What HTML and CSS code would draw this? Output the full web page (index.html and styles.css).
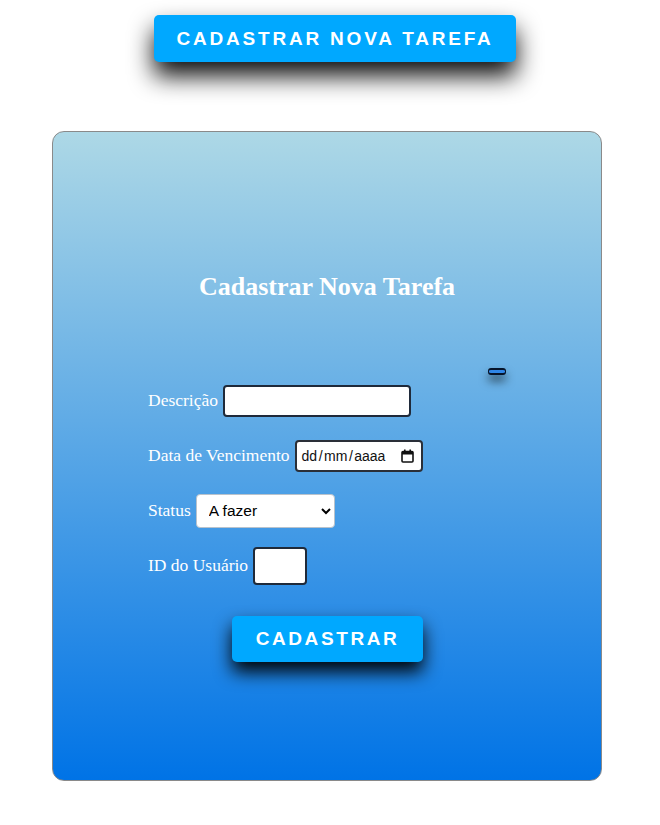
FILE: index.html
```html
<!DOCTYPE html>
<html lang="pt-BR">
<head>
<meta charset="utf-8">
<title>Cadastrar Nova Tarefa</title>
<link rel="stylesheet" href="styles.css">
</head>
<body>
  <div class="top">
    <button class="btn btn-top" type="button">CADASTRAR NOVA TAREFA</button>
  </div>
  <section class="card">
    <span class="dash"></span>
    <h2 class="title">Cadastrar Nova Tarefa</h2>
    <form class="form">
      <div class="row">
        <label for="desc">Descrição</label>
        <input id="desc" class="field field-desc" type="text">
      </div>
      <div class="row">
        <label for="data">Data de Vencimento</label>
        <div id="data" class="field field-date" role="textbox">
          <span class="date-text">dd<span class="sl">/</span>mm<span class="sl">/</span>aaaa</span>
          <svg class="cal" width="13" height="14" viewBox="0 0 13 14" aria-hidden="true">
            <rect x="1" y="2.5" width="11" height="10.5" rx="1" fill="none" stroke="#111" stroke-width="1.6"/>
            <rect x="1" y="2.5" width="11" height="3" fill="#111"/>
            <rect x="3" y="0.5" width="1.6" height="3" fill="#111"/>
            <rect x="8.4" y="0.5" width="1.6" height="3" fill="#111"/>
          </svg>
        </div>
      </div>
      <div class="row">
        <label for="status">Status</label>
        <select id="status" class="field field-select">
          <option>A fazer</option>
          <option>Fazendo</option>
          <option>Pronto</option>
        </select>
      </div>
      <div class="row">
        <label for="uid">ID do Usuário</label>
        <input id="uid" class="field field-id" type="text">
      </div>
      <div class="actions">
        <button class="btn btn-submit" type="button">CADASTRAR</button>
      </div>
    </form>
  </section>
</body>
</html>
```
FILE: styles.css
```css
* { box-sizing: border-box; }
html, body { margin: 0; padding: 0; background: #fff; }
body { font-family: "Liberation Serif", "Times New Roman", serif; }

.top {
  display: flex;
  padding-top: 15px;
  padding-left: 154px;
}

.btn {
  font-family: "Liberation Sans", Arial, sans-serif;
  font-weight: bold;
  color: #fff;
  background: #00a8ff;
  border: none;
  border-radius: 5px;
  letter-spacing: 2.8px;
  cursor: pointer;
}

.btn-top {
  width: 362px;
  height: 47px;
  font-size: 19px;
  box-shadow: 0 14px 24px rgba(0, 0, 0, 0.95);
}

.card {
  position: relative;
  width: 550px;
  height: 650px;
  margin: 69px 0 0 52px;
  border: 1px solid #8a8a8a;
  border-radius: 12px;
  background: linear-gradient(to bottom, #add8e6 0%, #0073e6 100%);
  padding-top: 137px;
}

.dash {
  position: absolute;
  left: 435px;
  top: 236px;
  width: 18px;
  height: 7px;
  border-top: 2px solid #06142a;
  border-bottom: 2px solid #06142a;
  border-left: 1px solid #06142a;
  border-right: 1px solid #06142a;
  border-radius: 3px;
  background: #2f86e8;
  box-shadow: 0 6px 10px rgba(0, 0, 0, 0.6);
}

.title {
  margin: 0;
  text-align: center;
  color: #fff;
  font-size: 26px;
  font-weight: bold;
  line-height: 36px;
}

.form {
  display: flex;
  flex-direction: column;
  margin-top: 68px;
  padding-left: 95px;
}

.row {
  display: flex;
  align-items: center;
  gap: 5px;
  height: 55px;
  color: #fff;
  font-size: 17.5px;
}

.row label { white-space: nowrap; }

.field {
  font-family: "Liberation Sans", Arial, sans-serif;
  font-size: 14px;
  background: #fff;
  color: #000;
  border: 2px solid #1f2a3a;
  border-radius: 4px;
  padding: 2px 6px;
}

.field-desc { width: 188px; height: 32px; }

.field-date {
  display: flex;
  align-items: center;
  justify-content: space-between;
  width: 128px;
  height: 32px;
  padding: 0 7px 0 5px;
  border-color: #2a2f38;
  font-size: 14px;
  color: #111;
}
.date-text { white-space: nowrap; }
.sl { padding: 0 1.5px; }
.cal { display: block; flex: none; }

.field-select {
  width: 139px;
  height: 34px;
  border: 1px solid #b8c2cc;
  padding: 2px 8px;
  font-size: 15.5px;
}
.field-id { width: 54px; height: 38px; }

.actions {
  display: flex;
  padding-left: 84px;
  margin-top: 23px;
}

.btn-submit {
  width: 191px;
  height: 46px;
  font-size: 19px;
  letter-spacing: 2.6px;
  box-shadow: 0 10px 18px rgba(0, 0, 0, 0.98);
}
```
